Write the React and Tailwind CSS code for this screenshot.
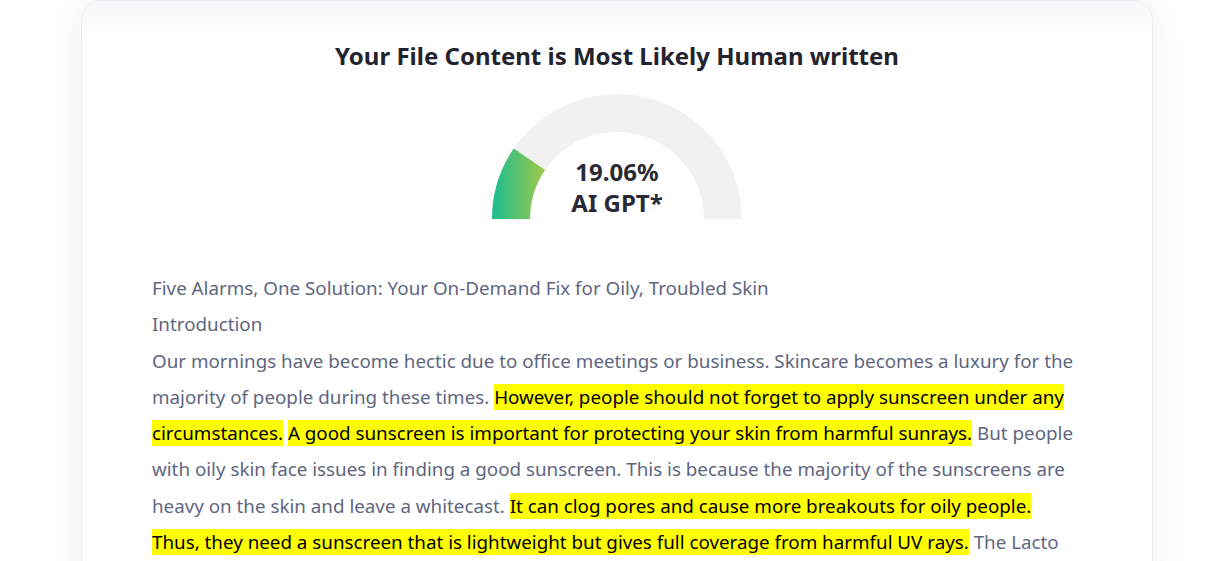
export default function App() {
  const font = { fontFamily: '"Noto Sans", "Open Sans", sans-serif' };
  return (
    <div className="w-[1211px] h-[561px] overflow-hidden bg-white" style={font}>
      <div className="ml-[81px] w-[1072px] h-[600px] rounded-[20px] border border-[#ececf4] bg-white shadow-[0_0_40px_rgba(40,40,90,0.07)] overflow-hidden">
        <div className="h-[40px] -mb-[40px] bg-gradient-to-b from-[#f7f7f9] to-white" />
        <div className="relative flex flex-col items-center pt-[37px]">
          <h1 className="text-[24px] leading-[36px] font-bold text-[#23232f]">Your File Content is Most Likely Human written</h1>
          <div className="relative mt-[20px] w-[250px] h-[125px]">
            <svg width="250" height="125" viewBox="0 0 250 125">
              <defs>
                <linearGradient id="g" x1="0" y1="0" x2="55" y2="0" gradientUnits="userSpaceOnUse">
                  <stop offset="0" stopColor="#19bd90" />
                  <stop offset="1" stopColor="#a6c947" />
                </linearGradient>
              </defs>
              <path d="M 0 125 A 125 125 0 0 1 250 125 L 212 125 A 87 87 0 0 0 38 125 Z" fill="#f1f1f1" />
              <path d="M 0 125 A 125 125 0 0 1 21.7 54.6 L 53.1 76.0 A 87 87 0 0 0 38 125 Z" fill="url(#g)" />
            </svg>
            <div className="absolute left-0 right-0 top-[62px] flex flex-col items-center text-[24px] leading-[31px] font-bold text-[#2a2a36]">
              <span>19.06%</span>
              <span>AI GPT*</span>
            </div>
          </div>
          <div className="self-stretch pl-[70px] pr-[76px] mt-[51px] text-[18.8px] leading-[36.3px] text-[#606680]">
            <div>Five Alarms, One Solution: Your On-Demand Fix for Oily, Troubled Skin</div>
            <div>Introduction</div>
            <p>
              Our mornings have become hectic due to office meetings or business. Skincare becomes a luxury for the majority of people during these times.{" "}
              <span className="bg-[#ffff00] text-black">However, people should not forget to apply sunscreen under any circumstances.</span>{" "}
              <span className="bg-[#ffff00] text-black">A good sunscreen is important for protecting your skin from harmful sunrays.</span>{" "}
              But people with oily skin face issues in finding a good sunscreen. This is because the majority of the sunscreens are heavy on the skin and leave a whitecast.{" "}
              <span className="bg-[#ffff00] text-black">It can clog pores and cause more breakouts for oily people.</span>{" "}
              <span className="bg-[#ffff00] text-black">Thus, they need a sunscreen that is lightweight but gives full coverage from harmful UV rays.</span>{" "}
              The Lacto Calamine sunscreen is a perfect choice for oily skin.
            </p>
          </div>
        </div>
      </div>
    </div>
  );
}
